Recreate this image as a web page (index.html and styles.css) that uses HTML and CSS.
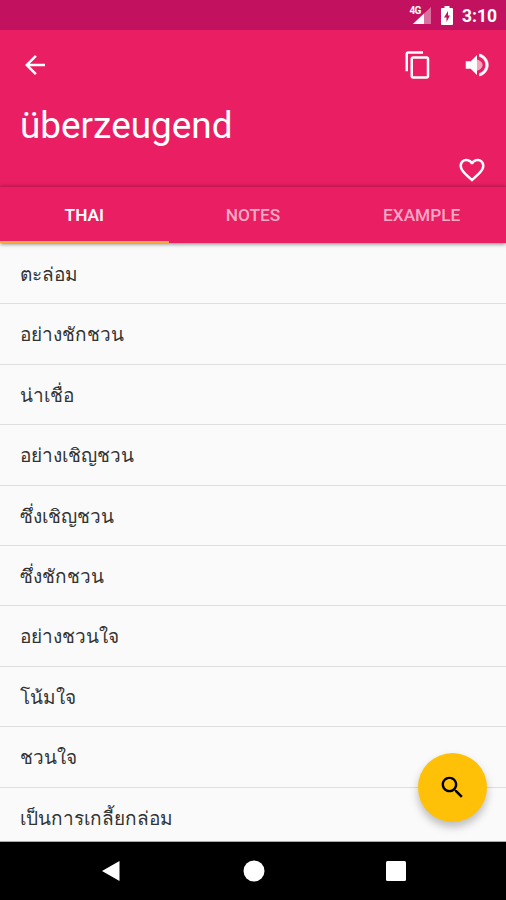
FILE: index.html
```html
<!DOCTYPE html>
<html lang="de">
<head>
  <meta charset="UTF-8">
  <meta name="viewport" content="width=device-width, initial-scale=1">
  <link rel="stylesheet" href="styles.css">
  <title>überzeugend</title>
</head>
<body>
  <div class="status-bar">
    <div class="signal">
      <span class="network">4G</span>
      <svg width="18" height="17" viewBox="0 0 18 17">
        <path d="M18 0V17H0z" fill="#fff" fill-opacity="0.4"/>
        <path d="M11 6.6V17H0z" fill="#fff"/>
      </svg>
    </div>
    <svg class="battery" width="12" height="19" viewBox="0 0 12 19">
      <path d="M3.5 0h5v2H11q1 0 1 1v15q0 1-1 1H1q-1 0-1-1V3q0-1 1-1h2.500z" fill="#fff"/>
      <path d="M7 5L3 11.500h2.500V16L9 9.500H7z" fill="#c2125f"/>
    </svg>
    <span class="clock">3:10</span>
  </div>

  <header class="header">
    <div class="toolbar">
      <svg class="back" width="30" height="30" viewBox="0 0 24 24">
        <path d="M20 11H7.830l5.590-5.590L12 4l-8 8 8 8 1.410-1.410L7.830 13H20v-2z"/>
      </svg>
      <svg class="copy" width="30" height="30" viewBox="0 0 24 24">
        <path d="M16 1H4c-1.100 0-2 .9-2 2v14h2V3h12V1zm3 4H8c-1.100 0-2 .9-2 2v14c0 1.100.9 2 2 2h11c1.100 0 2-.9 2-2V7c0-1.100-.9-2-2-2zm0 16H8V7h11v14z"/>
      </svg>
      <svg class="sound" width="30" height="30" viewBox="0 0 24 24">
        <path d="M3 9v6h4l5 5V4L7 9H3z"/>
        <path class="wave" d="M12 7.500v9c2.700-.7 4.500-2.400 4.500-4.500s-1.800-3.800-4.500-4.500z"/>
        <path class="outer-wave" d="M14 3.230v2.060c2.890.860 5 3.540 5 6.710s-2.110 5.850-5 6.710v2.060c4.010-.910 7-4.490 7-8.770s-2.990-7.860-7-8.770z"/>
      </svg>
    </div>
    <h1 class="word">überzeugend</h1>
    <div class="favorite">
      <svg width="30" height="30" viewBox="0 0 24 24">
        <path d="M16.500 3c-1.740 0-3.410.810-4.500 2.090C10.910 3.810 9.240 3 7.500 3 4.420 3 2 5.420 2 8.500c0 3.780 3.400 6.860 8.550 11.540L12 21.350l1.450-1.320C18.600 15.360 22 12.280 22 8.500 22 5.420 19.580 3 16.500 3zm-4.400 15.550l-.1.100-.1-.1C7.140 14.240 4 11.390 4 8.500 4 6.500 5.500 5 7.500 5c1.540 0 3.040.990 3.570 2.360h1.870C13.460 5.990 14.960 5 16.500 5c2 0 3.500 1.500 3.500 3.500 0 2.890-3.140 5.740-7.900 10.050z"/>
      </svg>
    </div>
  </header>

  <nav class="tabs">
    <a class="tab active">THAI</a>
    <a class="tab">NOTES</a>
    <a class="tab">EXAMPLE</a>
  </nav>

  <ul class="list" lang="th">
    <li>ตะล่อม</li>
    <li>อย่างชักชวน</li>
    <li>น่าเชื่อ</li>
    <li>อย่างเชิญชวน</li>
    <li>ซึ่งเชิญชวน</li>
    <li>ซึ่งชักชวน</li>
    <li>อย่างชวนใจ</li>
    <li>โน้มใจ</li>
    <li>ชวนใจ</li>
    <li>เป็นการเกลี้ยกล่อม</li>
  </ul>

  <div class="fab">
    <svg width="29" height="29" viewBox="0 0 24 24">
      <path d="M15.500 14h-.79l-.28-.27C15.410 12.590 16 11.110 16 9.500 16 5.910 13.090 3 9.500 3S3 5.910 3 9.500 5.910 16 9.500 16c1.610 0 3.090-.590 4.230-1.570l.27.280v.79l5 4.990L20.490 19l-4.990-5zm-6 0C7.010 14 5 11.990 5 9.500S7.010 5 9.500 5 14 7.010 14 9.500 11.990 14 9.500 14z"/>
    </svg>
  </div>

  <div class="nav-bar">
    <svg width="20" height="22" viewBox="0 0 20 22"><path d="M18.500 1v20L1 11z"/></svg>
    <svg width="22" height="22" viewBox="0 0 22 22"><circle cx="11" cy="11" r="10.500"/></svg>
    <svg width="20" height="20" viewBox="0 0 20 20"><rect width="20" height="20" rx="1.500"/></svg>
  </div>
</body>
</html>
```

FILE: styles.css
```css
* {
  margin: 0;
  padding: 0;
  box-sizing: border-box;
}

body {
  display: flex;
  flex-direction: column;
  width: 100%;
  height: 100vh;
  overflow: hidden;
  position: relative;
  background: #fafafa;
  font-family: Roboto, "Noto Sans", sans-serif;
}

svg {
  display: block;
  flex: none;
}

/* status bar */
.status-bar {
  display: flex;
  align-items: center;
  justify-content: flex-end;
  height: 30px;
  flex: none;
  padding-right: 9px;
  background: #c2125f;
  color: white;
}

.signal {
  display: flex;
  align-items: flex-start;
}

.network {
  font-size: 10px;
  line-height: 10px;
  font-weight: 700;
  letter-spacing: -0.5px;
  margin-right: -8px;
}

.signal svg {
  margin-top: 1px;
}

.battery {
  margin: 0 9px 0 10px;
}

.clock {
  font-size: 17.5px;
  font-weight: 700;
  line-height: 30px;
  padding-top: 2px;
}

/* header */
.header {
  height: 156px;
  flex: none;
  background: #e91e63;
  color: white;
}

.header svg {
  fill: white;
}

.toolbar {
  display: flex;
  align-items: center;
  height: 69px;
  padding: 0 14px 0 20px;
}

.copy {
  margin-left: auto;
  margin-right: 29px;
}

.wave {
  opacity: 0.6;
}

.outer-wave {
  stroke: white;
  stroke-width: 0.5;
}

.word {
  height: 56px;
  padding-left: 20px;
  font-size: 36.9px;
  font-weight: 400;
  line-height: 54px;
}

.favorite {
  display: flex;
  justify-content: flex-end;
  padding-right: 19px;
}

/* tabs */
.tabs {
  display: flex;
  height: 57px;
  flex: none;
  position: relative;
  background: #e91e63;
  border-top: 1px solid #c61a55;
  box-shadow: 0 1px 4px rgba(0, 0, 0, 0.5);
}

.tab {
  flex: 1;
  text-align: center;
  font-size: 17.3px;
  font-weight: 500;
  line-height: 57px;
  color: #f8a9c3;
}

.tab.active {
  color: white;
  font-weight: 600;
  border-bottom: 2px solid #ffab40;
}

/* translations */
.list {
  flex: 1;
  min-height: 0;
  overflow: hidden;
  list-style: none;
  padding-top: 1px;
  border-bottom: 1px solid #aaa;
}

.list li {
  height: 60.4px;
  padding-left: 20px;
  border-bottom: 1px solid #dedede;
  font-size: 19px;
  line-height: 62px;
  color: #333;
}

.fab {
  position: absolute;
  right: 19px;
  bottom: 78px;
  display: flex;
  align-items: center;
  justify-content: center;
  width: 69px;
  height: 69px;
  border-radius: 50%;
  background: #ffc107;
  box-shadow: 0 5px 9px rgba(0, 0, 0, 0.25);
}

/* system navigation */
.nav-bar {
  display: flex;
  align-items: center;
  justify-content: space-between;
  height: 58px;
  flex: none;
  padding: 0 100px 0 101px;
  background: black;
}

.nav-bar svg {
  fill: white;
}
```
